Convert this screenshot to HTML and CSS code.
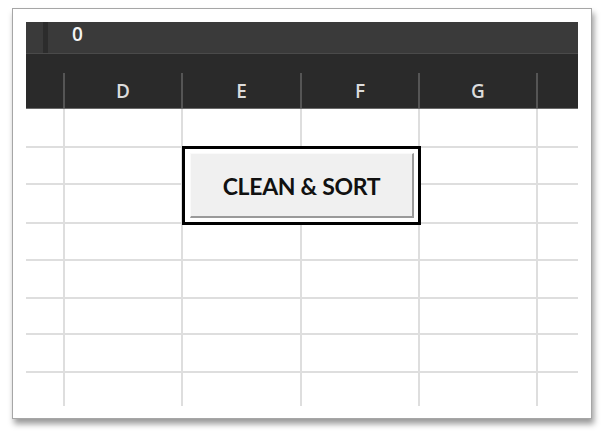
FILE: index.html
```html
<!DOCTYPE html>
<html>
<head>
  <title>Clean &amp; Sort</title>
  <link rel="stylesheet" href="styles.css">
</head>
<body>
  <div class="frame">
    <div class="formula-bar">
      <div class="name-box"></div>
      <div class="bar-split"></div>
      <div class="formula-value">0</div>
    </div>

    <div class="col-header">
      <div class="col-head corner"></div>
      <div class="col-head">D</div>
      <div class="col-head">E</div>
      <div class="col-head">F</div>
      <div class="col-head">G</div>
      <div class="col-head last"></div>
    </div>

    <div class="sheet">
      <div class="grid" id="grid"></div>

      <div class="macro-button">
        <button class="macro-face">CLEAN &amp; SORT</button>
      </div>
    </div>
  </div>

  <script src="grid.js"></script>
</body>
</html>
```

FILE: grid.js
```js
// build the empty worksheet cells
var grid = document.getElementById('grid');
var rows = 8;
var cols = 6;

for (var r = 0; r < rows; r++) {
  for (var c = 0; c < cols; c++) {
    var cell = document.createElement('div');
    cell.className = 'cell';
    if (r === rows - 1) cell.className += ' last-row';
    if (c === cols - 1) cell.className += ' last-col';
    grid.appendChild(cell);
  }
}
```

FILE: styles.css
```css
:root {
  --frame-border: #a6a6a6;
  --bar: #3a3a3a;
  --bar-dark: #2c2c2c;
  --header: #2a2a2a;
  --header-text: #dcdcdc;
  --grid-line: #dedede;
  --face: #f0f0f0;
  --font: 'Open Sans', 'Noto Sans', sans-serif;
}

* {
  box-sizing: border-box;
  margin: 0;
  padding: 0;
}

body {
  width: 604px;
  height: 435px;
  background: #ffffff;
  font-family: var(--font);
  padding: 8px 0 0 12px;
}

.frame {
  width: 580px;
  height: 411px;
  background: #ffffff;
  border: 1px solid var(--frame-border);
  box-shadow: 2px 5px 6px rgba(0, 0, 0, 0.4);
  padding: 13px 13px 0 13px;
}

/* formula bar */
.formula-bar {
  display: flex;
  height: 32px;
  background: var(--bar);
  border-bottom: 1px solid #4a4a4a;
}

.name-box {
  width: 17px;
  background: var(--bar);
}

.bar-split {
  width: 5px;
  background: var(--bar-dark);
}

.formula-value {
  flex: 1;
  color: #f4f4f4;
  font-size: 19px;
  font-weight: 600;
  line-height: 22px;
  padding: 1px 0 0 24px;
}

/* column header */
.col-header {
  display: grid;
  grid-template-columns: 39px 118px 119px 118px 118px 40px;
  height: 55px;
  background: var(--header);
  border-bottom: 1px solid #6a6a6a;
}

.col-head {
  color: var(--header-text);
  font-size: 19px;
  font-weight: 600;
  text-align: center;
  line-height: 22px;
  padding-top: 26px;
  border-right: 2px solid #555555;
  border-image: linear-gradient(to bottom, transparent 19px, #555555 19px) 1;
}

.col-head.last {
  border-right: none;
  border-image: none;
}

/* worksheet */
.sheet {
  position: relative;
}

.grid {
  display: grid;
  grid-template-columns: 39px 118px 119px 118px 118px 40px;
  grid-template-rows: 39px 37px 39px 37px 38px 36px 38px 33px;
}

.cell {
  border-right: 2px solid var(--grid-line);
  border-bottom: 2px solid var(--grid-line);
}

.cell.last-col {
  border-right: none;
}

.cell.last-row {
  border-bottom: none;
}

/* macro button drawn over the cells */
.macro-button {
  position: absolute;
  left: 156px;
  top: 37px;
  width: 239px;
  height: 79px;
  border: 3px solid #000000;
  background: #ffffff;
  padding: 4px 4px 4px 5px;
}

.macro-face {
  display: block;
  width: 100%;
  height: 100%;
  background: var(--face);
  border: none;
  border-top: 1px solid #fafafa;
  border-left: 1px solid #fafafa;
  border-right: 2px solid #9a9a9a;
  border-bottom: 2px solid #9a9a9a;
  font-family: 'Lato', var(--font);
  font-size: 23px;
  font-weight: 700;
  color: #111111;
  letter-spacing: -0.3px;
  padding-top: 1px;
}
```
